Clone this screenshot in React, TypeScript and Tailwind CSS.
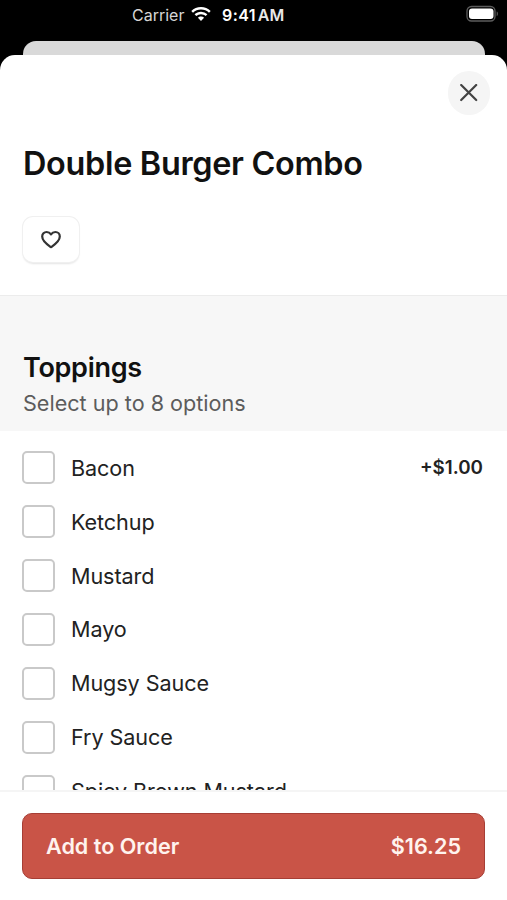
import React from 'react';

const toppings = [
  { name: 'Bacon', price: '+$1.00' },
  { name: 'Ketchup' },
  { name: 'Mustard' },
  { name: 'Mayo' },
  { name: 'Mugsy Sauce' },
  { name: 'Fry Sauce' },
  { name: 'Spicy Brown Mustard' },
];

const StatusBar = () => {
  return (
    <div className="flex h-[30px] shrink-0 items-center pl-[132px] text-white">
      <span className="w-[60px] text-[16px] leading-[30px] text-[#d6d6d6]">Carrier</span>
      <svg viewBox="0 0 20 15" className="-ml-[1px] h-[15px] w-5 -translate-y-px" fill="currentColor">
        <path d="M10 0C6.200 0 2.800 1.500.3 3.900l1.700 1.800A11.500 11.500 0 0 1 10 2.500c3.100 0 5.900 1.200 8 3.200l1.700-1.800A14 14 0 0 0 10 0Z" />
        <path d="M10 4.800c-2.500 0-4.700 1-6.400 2.500l1.700 1.800A6.800 6.800 0 0 1 10 7.200c1.800 0 3.400.7 4.700 1.900l1.700-1.800A9.300 9.300 0 0 0 10 4.800Z" />
        <path d="M10 9.600c-1.200 0-2.300.5-3.100 1.200l3.100 3.300 3.100-3.300A4.600 4.600 0 0 0 10 9.600Z" />
      </svg>
      <span className="ml-[11px] text-[16px] leading-[30px] font-semibold tracking-[0.400px]">9:41</span>
      <span className="ml-[2px] text-[16px] leading-[30px] font-semibold text-[#e8e8e8]">AM</span>
      <svg viewBox="0 0 34 18" className="mr-[7px] ml-auto h-[18px] w-[34px] shrink-0 -translate-y-px">
        <rect x="1" y="1.500" width="28" height="14.500" rx="4.500" fill="none" stroke="#5c5c5c" strokeWidth="1.300" />
        <rect x="3" y="3.500" width="24.500" height="10.500" rx="3" fill="#fff" />
        <path d="M30.700 6.500c1.600.5 1.600 4 0 4.500Z" fill="#5c5c5c" />
      </svg>
    </div>
  );
};

const Header = () => {
  return (
    <div className="flex h-[241px] shrink-0 flex-col border-b border-[#ececec] px-[23px]">
      {/* Close Button */}
      <button
        type="button"
        aria-label="Close"
        className="mt-4 -mr-[6px] flex h-[44px] w-[42px] items-center justify-center self-end rounded-full bg-[#f5f5f5]"
      >
        <svg viewBox="0 0 18 18" className="h-[18px] w-[18px]" fill="none" stroke="#444" strokeWidth="2.200" strokeLinecap="round">
          <path d="M1.200 1l15 15M16.200 1l-15 15" />
        </svg>
      </button>

      <h1 className="mt-7 text-[32.400px] leading-[42px] font-semibold tracking-[-0.300px] text-[#111]">
        Double Burger Combo
      </h1>

      {/* Favorite Button */}
      <button
        type="button"
        aria-label="Favorite"
        className="mt-[32px] flex h-[45px] w-[56px] items-center justify-center rounded-[10px] bg-white shadow-[0_0_0_1px_#f0f0f0,0_2px_2px_#e4e4e4]"
      >
        <svg
          viewBox="0 0 22 20"
          className="h-5 w-[22px] -translate-y-px"
          fill="none"
          stroke="#333"
          strokeWidth="2.200"
          strokeLinejoin="round"
        >
          <path d="M11 18.200C9.500 17 2.200 12.600 2.200 7.500c0-2.500 1.900-4.500 4.400-4.500 1.800 0 3.400.9 4.400 2.400 1-1.500 2.600-2.400 4.400-2.400 2.500 0 4.400 2 4.400 4.500 0 5.100-7.300 9.500-8.800 10.700Z" />
        </svg>
      </button>
    </div>
  );
};

export default function App() {
  return (
    <div className="flex h-[900px] w-[507px] flex-col overflow-hidden bg-black font-['Inter','Liberation_Sans',sans-serif]">
      <StatusBar />

      {/* Card behind the sheet */}
      <div className="mt-[11px] mr-[22px] ml-[23px] h-[14px] shrink-0 rounded-t-[13px] bg-[#d9d9d9]"></div>

      <div className="flex min-h-0 flex-1 flex-col overflow-hidden rounded-t-[15px] bg-white">
        <Header />

        <div className="h-[135px] shrink-0 bg-[#f7f7f7] px-[23px] pt-[54px]">
          <h2 className="text-[27px] leading-[36px] font-semibold tracking-[-0.300px] text-[#111]">Toppings</h2>
          <p className="text-[21.600px] leading-[34px] text-[#5c5c5c]">Select up to 8 options</p>
        </div>

        <div className="min-h-0 flex-1 overflow-hidden pt-[10px] pr-6 pl-[22px]">
          {toppings.map((topping) => (
            <label key={topping.name} className="flex h-[53.900px] items-center">
              <input
                type="checkbox"
                className="h-[33px] w-[33px] shrink-0 appearance-none rounded-[5px] border-2 border-[#c9c9c9] bg-white"
              />
              <span className="ml-4 text-[21.600px] tracking-[-0.080px] text-[#222]">{topping.name}</span>
              {topping.price && (
                <span className="ml-auto text-[18.800px] font-semibold text-[#222]">{topping.price}</span>
              )}
            </label>
          ))}
        </div>

        {/* Order Button */}
        <div className="h-[110px] shrink-0 border-t-2 border-[#f5f5f5] bg-white px-[22px] pt-[21px]">
          <button
            type="button"
            className="flex h-[66px] w-full items-center justify-between rounded-[10px] border-[1.500px] border-[#a63e35] bg-[#c95447] px-[23px] text-[21.600px] font-semibold text-[#fff3ee]"
          >
            <span>Add to Order</span>
            <span>$16.25</span>
          </button>
        </div>
      </div>
    </div>
  );
}
